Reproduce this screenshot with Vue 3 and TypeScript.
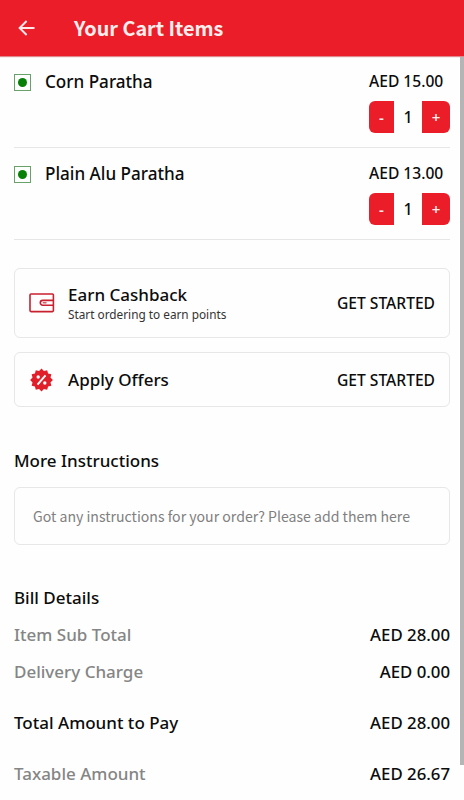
<script setup lang="ts">
import { ref } from 'vue'

interface CartItem {
  name: string
  price: number
  qty: number
}

interface BillRow {
  label: string
  amount: string
  kind: 'muted' | 'total' | 'tax'
}

const items = ref<CartItem[]>([
  { name: 'Corn Paratha', price: 15, qty: 1 },
  { name: 'Plain Alu Paratha', price: 13, qty: 1 },
])

const bill: BillRow[] = [
  { label: 'Item Sub Total', amount: '28.00', kind: 'muted' },
  { label: 'Delivery Charge', amount: '0.00', kind: 'muted' },
  { label: 'Total Amount to Pay', amount: '28.00', kind: 'total' },
  { label: 'Taxable Amount', amount: '26.67', kind: 'tax' },
]

const note = ref('')

function change(item: CartItem, step: number) {
  item.qty = Math.max(0, item.qty + step)
}

// Twelve-pointed seal outline
const seal = Array.from({ length: 24 }, (_, i) => {
  const r = i % 2 === 0 ? 11.4 : 9.3
  const a = (Math.PI * i) / 12
  return `${(12 + r * Math.sin(a)).toFixed(2)},${(12 - r * Math.cos(a)).toFixed(2)}`
}).join(' ')
</script>

<template>
  <div class="screen">
    <header class="bar">
      <button class="back" aria-label="Back">
        <svg width="18" height="18" viewBox="0 0 18 18">
          <path d="M17.5 9H2.5M9.6 2L2.6 9L9.6 16" fill="none" stroke="currentColor" stroke-width="1.9" />
        </svg>
      </button>
      <h1>Your Cart Items</h1>
    </header>

    <main class="body">
      <section v-for="item in items" :key="item.name" class="item">
        <span class="veg"><i></i></span>
        <span class="name">{{ item.name }}</span>
        <div class="side">
          <span class="price">AED {{ item.price.toFixed(2) }}</span>
          <div class="stepper">
            <button class="minus" @click="change(item, -1)">-</button>
            <span class="qty">{{ item.qty }}</span>
            <button class="plus" @click="change(item, 1)">+</button>
          </div>
        </div>
      </section>

      <section class="card cashback">
        <svg class="icon" width="26" height="22" viewBox="0 0 26 22">
          <g fill="none" stroke="#c9202f" stroke-width="1.6">
            <rect x="1" y="2" width="23.4" height="17.6" rx="1" />
            <path d="M24.4 8.4H13.7a2.4 2.4 0 0 0 0 4.8H24.4" />
            <path d="M13.8 10.8H17.5" stroke-width="1.1" />
          </g>
        </svg>
        <div class="text">
          <strong>Earn Cashback</strong>
          <small>Start ordering to earn points</small>
        </div>
        <span class="action">GET STARTED</span>
      </section>

      <section class="card offers">
        <svg class="icon" width="26" height="24" viewBox="-0.5 0 26 24">
          <polygon :points="seal" fill="#e01f2b" />
          <path d="M16 7.4L8 16.6" stroke="#fff" stroke-width="1.9" />
          <circle cx="8.7" cy="9" r="1.7" fill="#fff" />
          <circle cx="15.3" cy="15" r="1.7" fill="#fff" />
        </svg>
        <div class="text"><strong>Apply Offers</strong></div>
        <span class="action">GET STARTED</span>
      </section>

      <h2 class="more">More Instructions</h2>
      <input v-model="note" class="note" placeholder="Got any instructions for your order? Please add them here" />

      <h2 class="details">Bill Details</h2>
      <div v-for="row in bill" :key="row.label" class="row" :class="row.kind">
        <span class="label">{{ row.label }}</span>
        <span class="amount">AED {{ row.amount }}</span>
      </div>
    </main>
    <div class="scrollbar"></div>
  </div>
</template>

<style>
body {
  margin: 0;
  background: #fefefe;
}
</style>

<style scoped>
.screen {
  position: relative;
  box-sizing: border-box;
  width: 464px;
  height: 800px;
  overflow: hidden;
  background: #fefefe;
  color: #0c0c0c;
  font-family: "Noto Sans", "Open Sans", sans-serif;
  font-size: 17px;
  font-weight: 500;
}

button {
  padding: 0;
  border: 0;
  color: #ffe9e9;
  background: #ea1d29;
  font: inherit;
}

.bar {
  display: flex;
  align-items: center;
  height: 56px;
  box-sizing: border-box;
  padding-left: 17px;
  color: #fff;
  background: #ea1d29;
  box-shadow: 0 1px 1px rgba(190, 20, 30, 0.5);
}

.back {
  display: flex;
  width: 57px;
}

h1 {
  margin: 0;
  font: 700 19.8px/28px "Noto Sans CJK SC", sans-serif;
  color: #ffeeee;
}

.body {
  display: flex;
  flex-direction: column;
  padding: 0 14px;
}

.item {
  display: flex;
  box-sizing: border-box;
  height: 92px;
  border-bottom: 1px solid #e6e6e6;
}

.veg {
  display: flex;
  align-items: center;
  justify-content: center;
  box-sizing: border-box;
  width: 17px;
  height: 17px;
  margin-top: 18px;
  border: 1px solid #68a268;
}

.veg i {
  width: 9px;
  height: 9px;
  border-radius: 50%;
  background: #078007;
}

.name {
  margin: 15px 0 0 14px;
  font-size: 17.1px;
  line-height: 22px;
}

.side {
  width: 81px;
  margin-left: auto;
}

.price {
  display: block;
  margin: 14px 0 9px;
  font-size: 15.6px;
  line-height: 22px;
  white-space: nowrap;
}

.stepper {
  display: flex;
  width: 81px;
  height: 32px;
  font-size: 16px;
  line-height: 32px;
  text-align: center;
}

.minus,
.plus {
  font-size: 15px;
  font-weight: 600;
}

.minus {
  width: 25px;
  border-radius: 6px 0 0 6px;
}

.qty {
  flex: 1;
}

.plus {
  width: 28px;
  border-radius: 0 6px 6px 0;
}

.card {
  display: flex;
  align-items: center;
  box-sizing: border-box;
  padding: 0 14px;
  border: 1px solid #e7e7e7;
  border-radius: 6px;
}

.cashback {
  height: 70px;
  margin-top: 28px;
}

.offers {
  height: 55px;
  margin-top: 14px;
}

.icon {
  margin-right: 13px;
}

.text {
  display: flex;
  flex-direction: column;
}

strong {
  font-weight: 500;
  line-height: 22px;
}

small {
  font-size: 11.8px;
  font-weight: 400;
  line-height: 17px;
  color: #333;
}

.action {
  margin-left: auto;
  font-size: 15.6px;
  line-height: 22px;
}

.cashback .action {
  padding-bottom: 1px;
}

h2 {
  margin: 0;
  font-size: 17px;
  font-weight: 500;
  line-height: 22px;
}

.more {
  margin-top: 43px;
}

.note {
  box-sizing: border-box;
  height: 58px;
  margin-top: 15px;
  padding: 0 18px 1px;
  border: 1px solid #e7e7e7;
  border-radius: 6px;
  outline: 0;
  background: transparent;
  font: 400 14.1px "Noto Sans CJK SC", sans-serif;
}

.note::placeholder {
  color: #808080;
}

.details {
  margin-top: 42px;
}

.row {
  display: flex;
  justify-content: space-between;
  margin-top: 15px;
  line-height: 22px;
}

.amount {
  font-size: 16.8px;
}

.muted .label,
.tax .label {
  color: #858585;
}

.total,
.tax {
  margin-top: 29px;
}

.scrollbar {
  position: absolute;
  top: 57px;
  right: 0;
  width: 4px;
  height: 708px;
  background: #b5b5b5;
}
</style>
